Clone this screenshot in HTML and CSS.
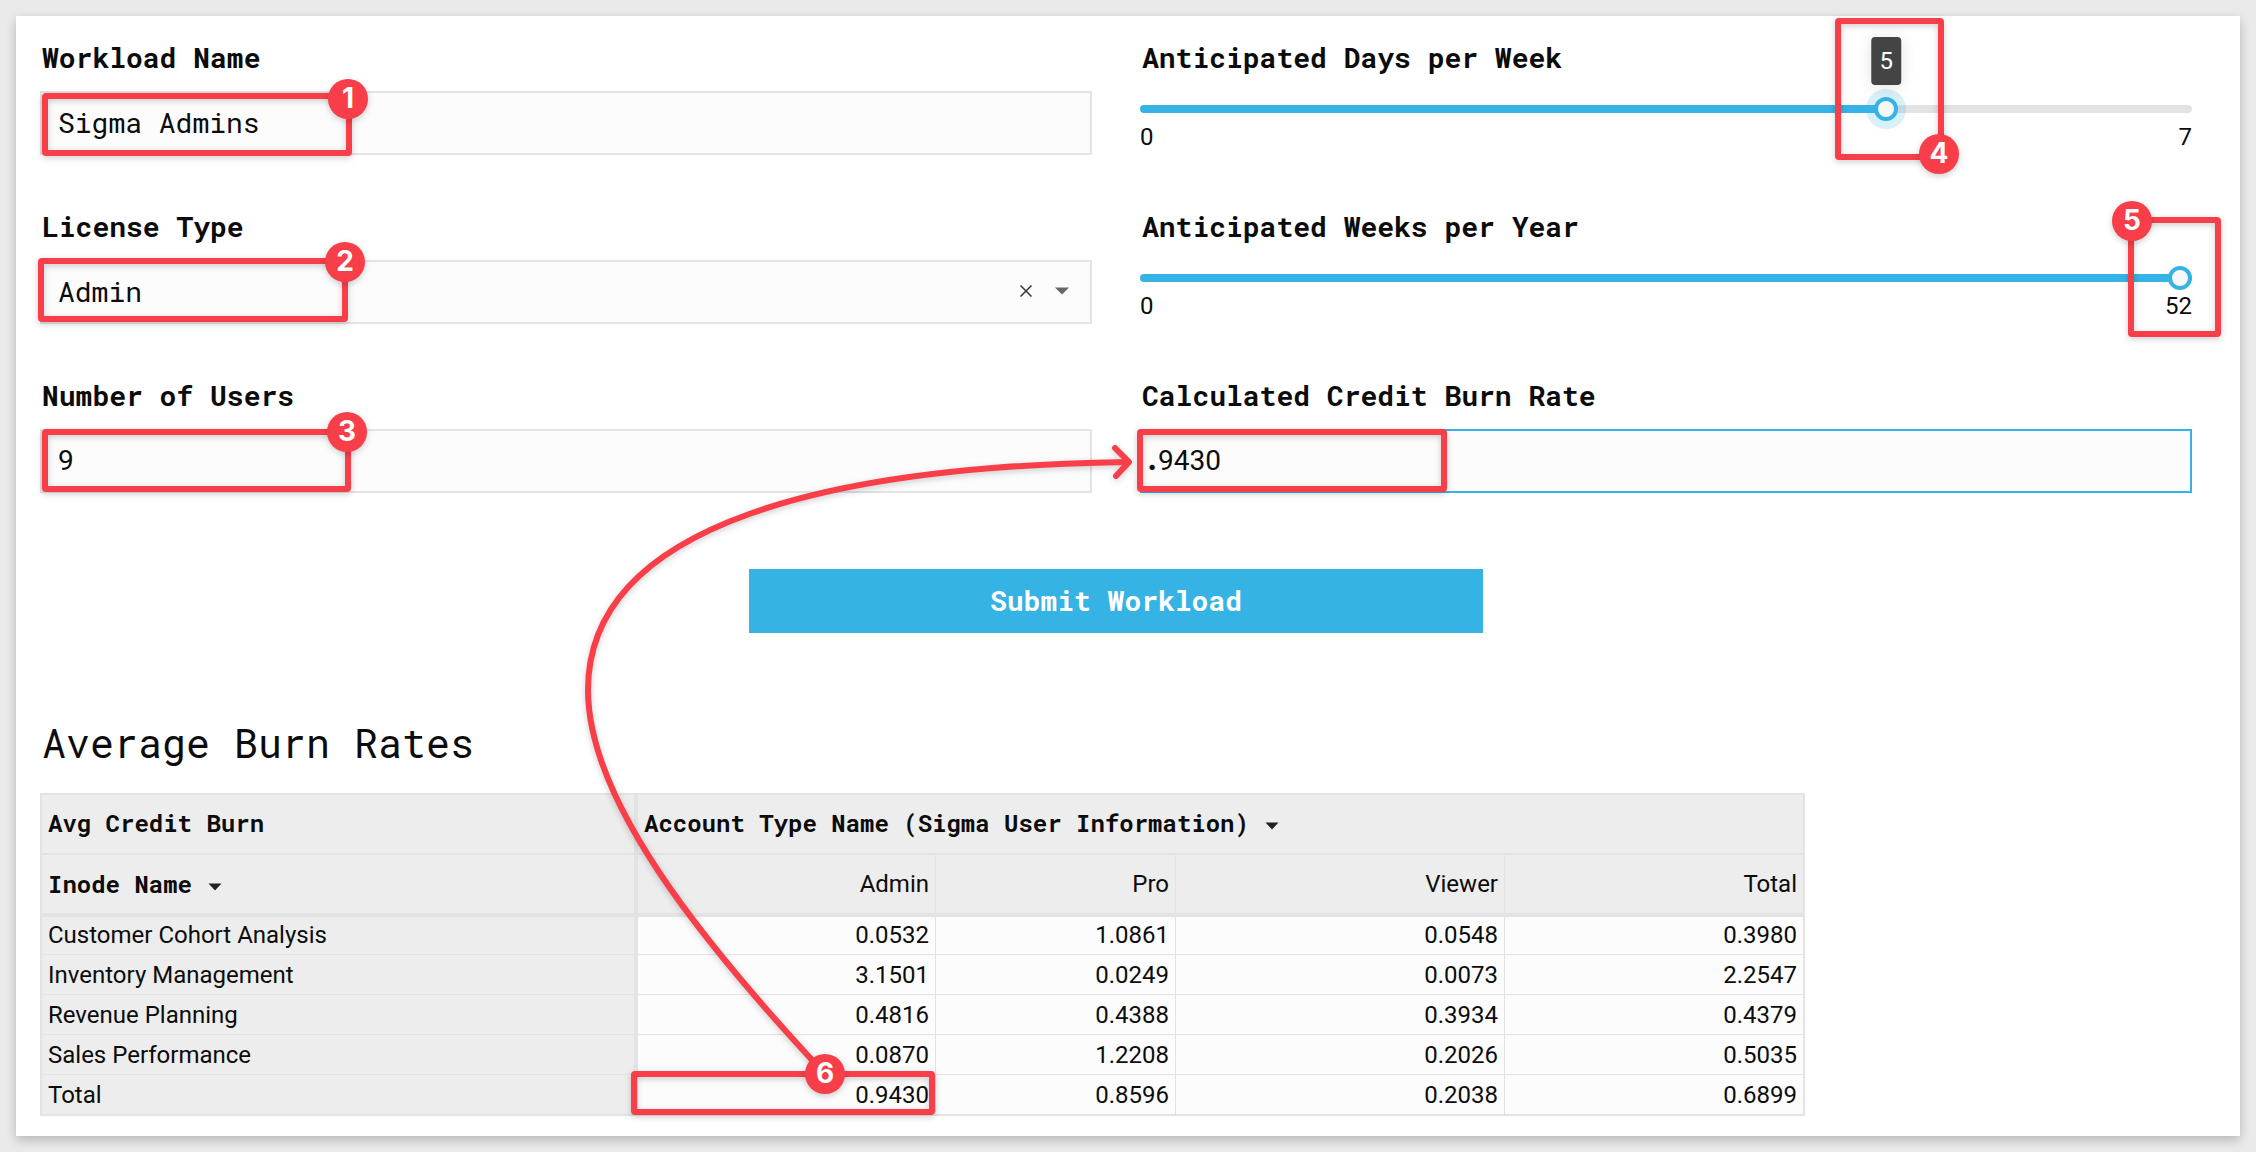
FILE: index.html
```html
<!DOCTYPE html>
<html lang="en">
<head>
<meta charset="utf-8">
<title>Workload Calculator</title>
<link rel="stylesheet" href="styles.css">
</head>
<body>
<main class="card">
  <form class="form">
    <div class="fields">
      <div class="field">
        <label class="label" for="workload">Workload Name</label>
        <input class="control mono" id="workload" type="text" value="Sigma Admins">
      </div>
      <div class="field">
        <label class="label" for="days">Anticipated Days per Week</label>
        <div class="slider">
          <input class="range active" id="days" type="range" min="0" max="7" value="5" style="--fill:71.4%">
          <output class="tooltip" for="days">5</output>
          <div class="limits"><span>0</span><span>7</span></div>
        </div>
      </div>
      <div class="field">
        <label class="label" for="license">License Type</label>
        <div class="control picker">
          <select class="select mono" id="license"><option>Admin</option></select>
          <button class="clear" type="button" aria-label="Clear">
            <svg width="12" height="12" viewBox="0 0 12 12"><path d="M0.5 0.5L11.5 11.5M11.5 0.5L0.5 11.5" fill="none" stroke="#333" stroke-width="1.5"/></svg>
          </button>
          <svg width="14" height="8" viewBox="0 0 14 8"><path d="M0 0.5H14L7 7.5Z" fill="#666"/></svg>
        </div>
      </div>
      <div class="field">
        <label class="label" for="weeks">Anticipated Weeks per Year</label>
        <div class="slider">
          <input class="range" id="weeks" type="range" min="0" max="52" value="52" style="--fill:100%">
          <div class="limits"><span>0</span><span>52</span></div>
        </div>
      </div>
      <div class="field">
        <label class="label" for="users">Number of Users</label>
        <input class="control" id="users" type="text" value="9">
      </div>
      <div class="field">
        <label class="label" for="burn">Calculated Credit Burn Rate</label>
        <input class="control focused" id="burn" type="text" value="9430">
      </div>
    </div>
    <button class="submit" type="button">Submit Workload</button>
  </form>

  <section class="report">
    <h1 class="title">Average Burn Rates</h1>
    <table class="pivot">
      <colgroup><col class="c-name"><col class="c-admin"><col class="c-pro"><col class="c-viewer"><col class="c-total"></colgroup>
      <thead>
        <tr class="groups">
          <th class="heading" scope="col">Avg Credit Burn</th>
          <th class="heading" scope="colgroup" colspan="4">Account Type Name (Sigma User Information)<svg class="caret" width="14" height="8" viewBox="0 0 14 8"><path d="M0.5 0.5H13.5L7 7.5Z" fill="#222"/></svg></th>
        </tr>
        <tr class="columns">
          <th class="heading" scope="col">Inode Name<svg class="caret" width="14" height="8" viewBox="0 0 14 8"><path d="M0.5 0.5H13.5L7 7.5Z" fill="#222"/></svg></th>
          <th scope="col">Admin</th><th scope="col">Pro</th><th scope="col">Viewer</th><th scope="col">Total</th>
        </tr>
      </thead>
      <tbody>
        <tr><th scope="row">Customer Cohort Analysis</th><td>0.0532</td><td>1.0861</td><td>0.0548</td><td>0.3980</td></tr>
        <tr><th scope="row">Inventory Management</th><td>3.1501</td><td>0.0249</td><td>0.0073</td><td>2.2547</td></tr>
        <tr><th scope="row">Revenue Planning</th><td>0.4816</td><td>0.4388</td><td>0.3934</td><td>0.4379</td></tr>
        <tr><th scope="row">Sales Performance</th><td>0.0870</td><td>1.2208</td><td>0.2026</td><td>0.5035</td></tr>
        <tr><th scope="row">Total</th><td>0.9430</td><td>0.8596</td><td>0.2038</td><td>0.6899</td></tr>
      </tbody>
    </table>
  </section>
</main>

<svg class="notes">
  <g class="stroke">
    <path d="M825 1074C700 940 588 800 588 690C588 520 840 466 1128 462"/>
    <path d="M1115 448L1129 462L1116 476"/>
  </g>
  <g class="stroke">
    <rect x="45" y="96" width="304" height="57" rx="1"/>
    <rect x="41" y="261" width="304" height="58" rx="1"/>
    <rect x="45" y="432" width="303" height="57" rx="1"/>
    <rect x="1838" y="21" width="103" height="136" rx="1"/>
    <rect x="2131" y="220" width="87" height="114" rx="1"/>
    <rect x="1140" y="432" width="304" height="57" rx="1"/>
    <rect x="634" y="1074" width="298" height="38" rx="1"/>
  </g>
  <g class="pin">
    <circle cx="348" cy="99" r="20"/>
    <circle cx="345" cy="262" r="20"/>
    <circle cx="347" cy="432" r="20"/>
    <circle cx="1939" cy="154" r="20"/>
    <circle cx="2132" cy="221" r="20"/>
    <circle cx="825" cy="1074" r="20"/>
  </g>
  <g class="pin-text">
    <text x="348" y="108">1</text>
    <text x="345" y="271">2</text>
    <text x="347" y="441">3</text>
    <text x="1939" y="163">4</text>
    <text x="2132" y="230">5</text>
    <text x="825" y="1083">6</text>
  </g>
  <text class="point" x="1152" y="470">.</text>
</svg>
</body>
</html>
```
FILE: styles.css
```css
* { box-sizing: border-box; }

body {
  position: relative;
  margin: 0;
  padding: 16px;
  background: #eaeaea;
  color: #0c0c0c;
  font-family: Roboto, "Liberation Sans", sans-serif;
  font-size: 24px;
}

.card {
  padding: 24px 48px 20px 24px;
  background: #fff;
  box-shadow: 0 4px 10px rgba(0, 0, 0, .22);
}

.mono, .label, .submit, .title, .heading {
  font-family: "Roboto Mono", "DejaVu Sans Mono", "Liberation Mono", monospace;
}

.form {
  display: flex;
  flex-direction: column;
  align-items: center;
  gap: 76px;
}

.fields {
  display: grid;
  grid-template-columns: 1fr 1fr;
  gap: 54px 48px;
  width: 100%;
}

.field {
  display: flex;
  flex-direction: column;
  gap: 15px;
}

.label {
  padding-left: 2px;
  font-size: 28px;
  font-weight: 700;
  line-height: 36px;
}

.control {
  width: 100%;
  height: 64px;
  padding: 0 16px 2px;
  border: 2px solid #e3e3e3;
  border-radius: 0;
  background: #fcfcfc;
  color: inherit;
  font-size: 28px;
  outline: none;
}

input.control:not(.mono) { font-family: inherit; }

.control.focused { border-color: #36b3e5; }

.picker {
  display: flex;
  align-items: center;
  gap: 23px;
  padding-right: 21px;
}

.select {
  flex: 1;
  appearance: none;
  border: 0;
  padding: 0;
  background: none;
  color: inherit;
  font-size: 28px;
}

.clear {
  display: flex;
  padding: 0;
  border: 0;
  background: none;
}

.slider {
  position: relative;
  display: flex;
  flex-direction: column;
  gap: 2px;
  padding-top: 6px;
}

.range {
  appearance: none;
  width: 100%;
  height: 24px;
  margin: 0;
  background: none;
}

.range::-webkit-slider-runnable-track {
  height: 8px;
  border-radius: 4px;
  background: linear-gradient(to right, #36b3e5 var(--fill), #e3e3e3 var(--fill));
}

.range::-webkit-slider-thumb {
  appearance: none;
  width: 24px;
  height: 24px;
  margin-top: -8px;
  border: 4px solid #36b3e5;
  border-radius: 50%;
  background: #f7f7f7;
}

.range.active::-webkit-slider-thumb {
  box-shadow: 0 0 0 8px rgba(54, 179, 229, .2);
}

.limits {
  display: flex;
  justify-content: space-between;
  line-height: 28px;
}

.tooltip {
  position: absolute;
  left: calc(12px + (100% - 24px) * 5 / 7);
  bottom: 66px;
  padding: 0 8px;
  border-radius: 4px;
  background: #444;
  box-shadow: 0 2px 16px rgba(0, 0, 0, .12);
  color: #fff;
  line-height: 48px;
  transform: translateX(-50%);
}

.submit {
  width: 34.1%;
  min-width: 320px;
  height: 64px;
  padding: 0 16px 2px;
  border: 0;
  background: #36b3e5;
  color: #fff;
  font-size: 28px;
  font-weight: 700;
}

.report { margin-top: 86px; }

.title {
  margin: 0 0 26px;
  padding-left: 2px;
  font-size: 40px;
  font-weight: 400;
  line-height: 48px;
}

.pivot {
  width: 1765px;
  table-layout: fixed;
  border-collapse: separate;
  border-spacing: 0;
  border: solid #e3e3e3;
  border-width: 2px 1px 1px 2px;
}

.c-name { width: 596px; }
.c-admin { width: 298px; }
.c-pro { width: 240px; }
.c-viewer { width: 329px; }

.pivot th, .pivot td {
  height: 40px;
  padding: 0 6px;
  border: solid #e3e3e3;
  border-width: 0 1px 1px 0;
  background: #fcfcfc;
  font-weight: 400;
  line-height: 28px;
  text-align: right;
}

.pivot th { background: #ededed; }

.pivot th:first-child {
  border-right-width: 4px;
  text-align: left;
}

.pivot tbody tr:first-child > * {
  height: 38px;
  padding-bottom: 2px;
}

.pivot .groups th {
  height: 60px;
  padding-bottom: 2px;
  border-bottom-width: 2px;
}

.pivot .columns th { height: 62px; border-bottom-width: 4px; }

.pivot .heading {
  font-weight: 700;
  text-align: left;
}

.caret {
  margin-left: 16px;
  vertical-align: middle;
}

.notes {
  position: absolute;
  top: 0;
  left: 0;
  width: 100%;
  height: 100%;
  pointer-events: none;
  font-family: Inter, sans-serif;
  font-weight: 700;
}

.stroke {
  fill: none;
  stroke: #f83e49;
  stroke-width: 6px;
  stroke-linecap: round;
  stroke-linejoin: round;
}

.stroke, .pin { filter: drop-shadow(0 2px 3px rgba(0, 0, 0, .2)); }

.pin { fill: #f83e49; }

.pin-text {
  fill: #fff;
  font-size: 28px;
  text-anchor: middle;
}

.point {
  fill: #0c0c0c;
  font-size: 32px;
  text-anchor: middle;
}
```
